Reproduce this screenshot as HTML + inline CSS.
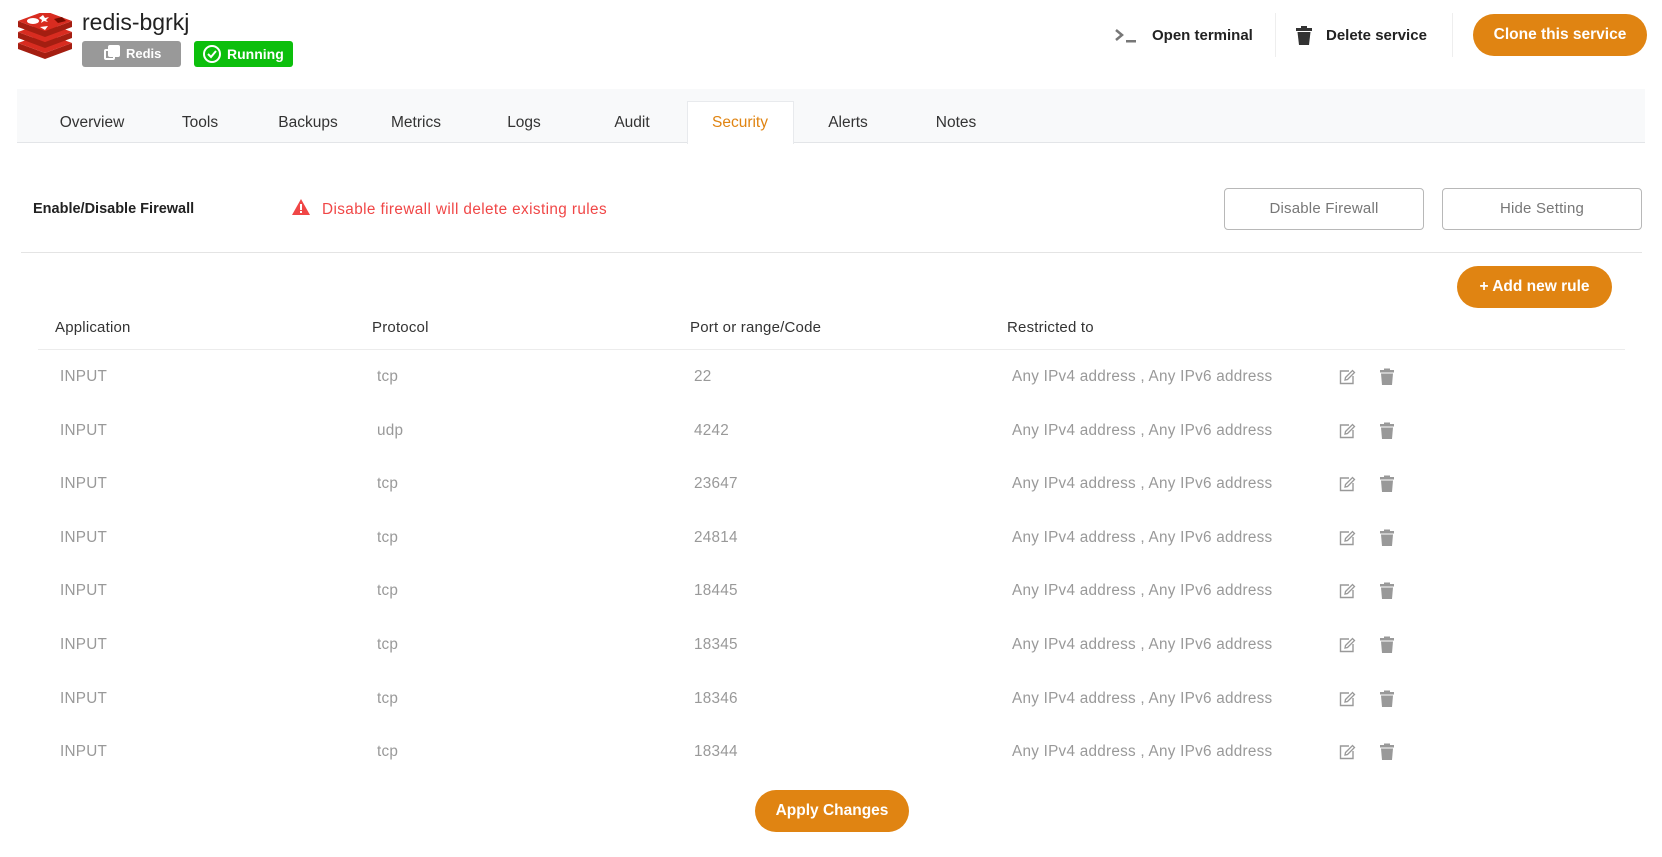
<!DOCTYPE html>
<html><head><meta charset="utf-8"><style>
*{box-sizing:border-box;margin:0;padding:0}
body{width:1662px;height:857px;background:#fff;font-family:"Liberation Sans",Arial,sans-serif;position:relative;overflow:hidden;color:#222}
.a{position:absolute;white-space:nowrap}
.tabbar{position:absolute;left:17px;top:89px;width:1628px;height:54px;background:#f8f9fa;border-bottom:1px solid #e3e5e8}
.tab{position:absolute;top:0;height:54px;line-height:68px;font-size:15.5px;color:#333;transform:translateX(-50%)}
.btn{position:absolute;border-radius:22px;background:#e08412;color:#fff;font-weight:bold;font-size:15.5px;text-align:center}
.obtn{position:absolute;border:1px solid #b8b8b8;border-radius:4px;color:#777;font-size:15px;text-align:center;line-height:40px;height:42px;letter-spacing:0.2px}
.hd{position:absolute;top:319px;font-size:15px;color:#333;letter-spacing:0.2px}
.c{position:absolute;font-size:15.3px;color:#999;transform:translateY(-50%);letter-spacing:0.25px}
</style></head><body>
<svg class="a" style="left:16px;top:13px" width="58" height="46" viewBox="0 0 58 46">
<path d="M2 30 L29 40 L56 30 L56 36 L29 46 L2 36Z" fill="#a41e11"/>
<path d="M2 30 L29 20 L56 30 L29 40Z" fill="#d82c20"/>
<path d="M2 19 L29 29 L56 19 L56 25 L29 35 L2 25Z" fill="#a41e11"/>
<path d="M2 19 L29 9 L56 19 L29 29Z" fill="#d82c20"/>
<path d="M2 8 L29 18 L56 8 L56 14 L29 24 L2 14Z" fill="#a41e11"/>
<path d="M2 8 L29 -2 L56 8 L29 18Z" fill="#d82c20"/>
<ellipse cx="17" cy="8" rx="6" ry="3" fill="#fff"/>
<path d="M27 2 L29 5 L33 4 L30 7 L32 9 L28 8 L25 10 L26 7 L23 5Z" fill="#fff"/>
<path d="M24 14 L32 13 L29 17Z" fill="#fff"/>
<path d="M38 6 L46 4 L50 8 L42 10Z" fill="#7a0c00"/>
</svg>
<div class="a" style="left:82px;top:9px;font-size:23px;color:#222">redis-bgrkj</div>
<div class="a" style="left:82px;top:41px;width:99px;height:26px;background:#999;border-radius:3px;color:#fff;font-size:13px;font-weight:bold;line-height:26px;padding-left:44px">Redis
<div class="a" style="left:22px;top:8px;width:11px;height:11px;border:2px solid #fff;border-radius:2px"></div>
<div class="a" style="left:26px;top:4px;width:12px;height:12px;background:#fff;border-radius:2px"></div></div>
<div class="a" style="left:194px;top:41px;width:99px;height:26px;background:#0cbf0c;border-radius:3px;color:#fff;font-size:14px;font-weight:bold;line-height:26px;padding-left:33px">Running
<div class="a" style="left:9px;top:4px;width:18px;height:18px;border:2px solid #fff;border-radius:50%"></div>
<svg class="a" style="left:13px;top:8px" width="10" height="10"><path d="M1 5 L4 8 L9 2" stroke="#fff" stroke-width="2" fill="none"/></svg></div>
<svg class="a" style="left:1114px;top:28px" width="24" height="16"><path d="M2 2 L8 7 L2 12" stroke="#777" stroke-width="2.5" fill="none"/><rect x="12" y="12" width="10" height="2.5" fill="#777"/></svg>
<div class="a" style="left:1152px;top:27px;font-size:15px;font-weight:bold;color:#222">Open terminal</div>
<div class="a" style="left:1275px;top:13px;width:1px;height:44px;background:#eee"></div>
<svg class="a" style="left:1296px;top:26px" width="16" height="19"><rect x="0" y="2" width="16" height="3" fill="#333"/><rect x="5" y="0" width="6" height="3" fill="#333"/><path d="M1.5 6 H14.5 L13 19 H3Z" fill="#333"/></svg>
<div class="a" style="left:1326px;top:27px;font-size:15px;font-weight:bold;color:#222">Delete service</div>
<div class="a" style="left:1452px;top:13px;width:1px;height:44px;background:#eee"></div>
<div class="btn" style="left:1473px;top:14px;width:174px;height:42px;line-height:42px">Clone this service</div>
<div class="tabbar">
<div class="a" style="left:670px;top:12px;width:107px;height:43px;background:#fff;border:1px solid #e8eaed;border-bottom:none"></div>
<div class="tab" style="left:75px">Overview</div>
<div class="tab" style="left:183px">Tools</div>
<div class="tab" style="left:291px">Backups</div>
<div class="tab" style="left:399px">Metrics</div>
<div class="tab" style="left:507px">Logs</div>
<div class="tab" style="left:615px">Audit</div>
<div class="tab" style="left:723px;color:#e08412">Security</div>
<div class="tab" style="left:831px">Alerts</div>
<div class="tab" style="left:939px">Notes</div>
</div>
<div class="a" style="left:33px;top:201px;font-size:14.5px;font-weight:bold;color:#222">Enable/Disable Firewall</div>
<svg class="a" style="left:292px;top:199px" width="18" height="16"><path d="M9 0 L18 16 H0Z" fill="#f04646"/><rect x="8" y="5" width="2" height="6" fill="#fff"/><rect x="8" y="12" width="2" height="2" fill="#fff"/></svg>
<div class="a" style="left:322px;top:201px;font-size:15.3px;color:#f04646;letter-spacing:0.4px">Disable firewall will delete existing rules</div>
<div class="obtn" style="left:1224px;top:188px;width:200px">Disable Firewall</div>
<div class="obtn" style="left:1442px;top:188px;width:200px">Hide Setting</div>
<div class="a" style="left:21px;top:252px;width:1621px;height:1px;background:#e4e4e4"></div>
<div class="btn" style="left:1457px;top:266px;width:155px;height:42px;line-height:42px">+ Add new rule</div>
<div class="hd" style="left:55px">Application</div>
<div class="hd" style="left:372px">Protocol</div>
<div class="hd" style="left:690px">Port or range/Code</div>
<div class="hd" style="left:1007px">Restricted to</div>
<div class="a" style="left:38px;top:349px;width:1587px;height:1px;background:#ececec"></div>
<div class="btn" style="left:755px;top:790px;width:154px;height:42px;line-height:42px">Apply Changes</div>
<div>
<div class="c" style="left:60px;top:377px">INPUT</div><div class="c" style="left:377px;top:377px">tcp</div><div class="c" style="left:694px;top:377px">22</div><div class="c" style="left:1012px;top:377px">Any IPv4 address , Any IPv6 address</div>
<div class="c" style="left:60px;top:431px">INPUT</div><div class="c" style="left:377px;top:431px">udp</div><div class="c" style="left:694px;top:431px">4242</div><div class="c" style="left:1012px;top:431px">Any IPv4 address , Any IPv6 address</div>
<div class="c" style="left:60px;top:484px">INPUT</div><div class="c" style="left:377px;top:484px">tcp</div><div class="c" style="left:694px;top:484px">23647</div><div class="c" style="left:1012px;top:484px">Any IPv4 address , Any IPv6 address</div>
<div class="c" style="left:60px;top:538px">INPUT</div><div class="c" style="left:377px;top:538px">tcp</div><div class="c" style="left:694px;top:538px">24814</div><div class="c" style="left:1012px;top:538px">Any IPv4 address , Any IPv6 address</div>
<div class="c" style="left:60px;top:591px">INPUT</div><div class="c" style="left:377px;top:591px">tcp</div><div class="c" style="left:694px;top:591px">18445</div><div class="c" style="left:1012px;top:591px">Any IPv4 address , Any IPv6 address</div>
<div class="c" style="left:60px;top:645px">INPUT</div><div class="c" style="left:377px;top:645px">tcp</div><div class="c" style="left:694px;top:645px">18345</div><div class="c" style="left:1012px;top:645px">Any IPv4 address , Any IPv6 address</div>
<div class="c" style="left:60px;top:699px">INPUT</div><div class="c" style="left:377px;top:699px">tcp</div><div class="c" style="left:694px;top:699px">18346</div><div class="c" style="left:1012px;top:699px">Any IPv4 address , Any IPv6 address</div>
<div class="c" style="left:60px;top:752px">INPUT</div><div class="c" style="left:377px;top:752px">tcp</div><div class="c" style="left:694px;top:752px">18344</div><div class="c" style="left:1012px;top:752px">Any IPv4 address , Any IPv6 address</div>
</div>
<svg class="a" style="left:0;top:0" width="1662" height="857">
<defs>
<g id="ic">
<path d="M10 2 H1.5 V14.5 H14 V7" stroke="#999" stroke-width="1.4" fill="none"/>
<path d="M6 11 L6.5 8.5 L13.5 1.5 L15.5 3.5 L8.5 10.5Z" stroke="#999" stroke-width="1.3" fill="none"/>
<rect x="41" y="1" width="14" height="2.5" fill="#999"/><rect x="45" y="-0.5" width="6" height="2" fill="#999"/>
<path d="M42 4.5 H54 L53 16 H43Z" fill="#999"/>
</g></defs>
<use href="#ic" x="1339" y="369"/>
<use href="#ic" x="1339" y="423"/>
<use href="#ic" x="1339" y="476"/>
<use href="#ic" x="1339" y="530"/>
<use href="#ic" x="1339" y="583"/>
<use href="#ic" x="1339" y="637"/>
<use href="#ic" x="1339" y="691"/>
<use href="#ic" x="1339" y="744"/>
</svg>
</body></html>
